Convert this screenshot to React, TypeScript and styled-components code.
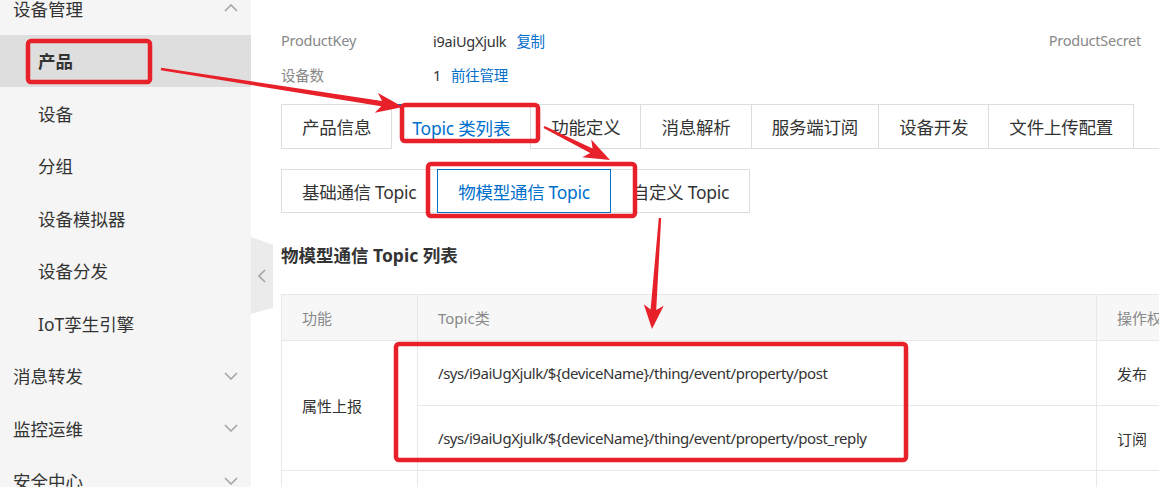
import styled, { createGlobalStyle } from 'styled-components';

const GlobalStyle = createGlobalStyle`
  html, body {
    margin: 0;
    padding: 0;
  }
  body {
    font-family: "Noto Sans", "Noto Sans CJK SC", sans-serif;
    color: #333;
    background: #fff;
    overflow: hidden;
  }
`;

const BLUE = '#0070cc';
const RED = '#e8202a';

type MenuEntry = {
  label: string;
  level: 0 | 1;
  active?: boolean;
  chevron?: 'up' | 'down';
};

const menu: MenuEntry[] = [
  { label: '设备管理', level: 0, chevron: 'up' },
  { label: '产品', level: 1, active: true },
  { label: '设备', level: 1 },
  { label: '分组', level: 1 },
  { label: '设备模拟器', level: 1 },
  { label: '设备分发', level: 1 },
  { label: 'IoT孪生引擎', level: 1 },
  { label: '消息转发', level: 0, chevron: 'down' },
  { label: '监控运维', level: 0, chevron: 'down' },
  { label: '安全中心', level: 0, chevron: 'down' },
];

const tabs = ['产品信息', 'Topic 类列表', '功能定义', '消息解析', '服务端订阅', '设备开发', '文件上传配置'];
const subTabs = ['基础通信 Topic', '物模型通信 Topic', '自定义 Topic'];

const topics = [
  { path: '/sys/i9aiUgXjulk/${deviceName}/thing/event/property/post', perm: '发布' },
  { path: '/sys/i9aiUgXjulk/${deviceName}/thing/event/property/post_reply', perm: '订阅' },
];

function Chevron({ dir }: { dir: 'up' | 'down' | 'left' }) {
  const d =
    dir === 'up' ? 'M1 7 L7 1 L13 7' : dir === 'down' ? 'M1 1 L7 7 L13 1' : 'M7 1 L1 7 L7 13';
  const w = dir === 'left' ? 8 : 14;
  const h = dir === 'left' ? 14 : 8;
  return (
    <svg width={w} height={h} viewBox={`0 0 ${w} ${h}`} fill="none">
      <path d={d} stroke="#a6a6a6" strokeWidth="1.6" />
    </svg>
  );
}

// red arrow as one polygon: tapering shaft + head
function arrowPoints(
  x1: number,
  y1: number,
  x2: number,
  y2: number,
  tail: number,
  shaft: number,
  headLen: number,
  headW: number,
) {
  const dx = x2 - x1;
  const dy = y2 - y1;
  const len = Math.hypot(dx, dy);
  const ux = dx / len;
  const uy = dy / len;
  const nx = -uy;
  const ny = ux;
  const bx = x2 - ux * headLen;
  const by = y2 - uy * headLen;
  const nbx = x2 - ux * headLen * 0.8;
  const nby = y2 - uy * headLen * 0.8;
  const pts = [
    [x1 + nx * tail, y1 + ny * tail],
    [nbx + nx * shaft, nby + ny * shaft],
    [bx + nx * headW, by + ny * headW],
    [x2, y2],
    [bx - nx * headW, by - ny * headW],
    [nbx - nx * shaft, nby - ny * shaft],
    [x1 - nx * tail, y1 - ny * tail],
  ];
  return pts.map((p) => `${p[0].toFixed(1)},${p[1].toFixed(1)}`).join(' ');
}

function Annotations() {
  return (
    <Overlay width="1159" height="487" viewBox="0 0 1159 487">
      <g fill="none" stroke={RED} strokeWidth="4.5">
        <rect x="28" y="41" width="122" height="41" rx="3" />
        <rect x="402" y="105" width="136" height="36" rx="3" />
        <rect x="428" y="164" width="207" height="52" rx="3" />
        <rect x="396" y="344" width="510" height="116" rx="3" />
      </g>
      <g fill={RED}>
        <polygon points={arrowPoints(161, 69, 403, 107, 1.2, 2.6, 27, 10)} />
        <polygon points={arrowPoints(544, 127, 610, 160, 1.2, 2.6, 26, 10)} />
        <polygon points={arrowPoints(660, 218, 652, 329, 1.2, 2.8, 24, 10)} />
      </g>
    </Overlay>
  );
}

export default function App() {
  return (
    <Page>
      <GlobalStyle />
      <Sidebar>
        <MenuList>
          {menu.map((m) => (
            <MenuItem key={m.label} $level={m.level} $active={!!m.active}>
              <span>{m.label}</span>
              {m.chevron ? <Chevron dir={m.chevron} /> : null}
            </MenuItem>
          ))}
        </MenuList>
      </Sidebar>
      <CollapseHandle>
        <Chevron dir="left" />
      </CollapseHandle>
      <Main>
        <InfoGrid>
          <Label>ProductKey</Label>
          <Value>
            i9aiUgXjulk<LinkText>复制</LinkText>
          </Value>
          <Label>ProductSecret</Label>
          <Label>设备数</Label>
          <Value>
            1<LinkText>前往管理</LinkText>
          </Value>
          <span />
        </InfoGrid>
        <TabBar>
          {tabs.map((t, i) => (
            <Tab key={t} $active={i === 1}>
              {t}
            </Tab>
          ))}
        </TabBar>
        <SubTabGroup>
          {subTabs.map((t, i) => (
            <SubTab key={t} $active={i === 1}>
              {t}
            </SubTab>
          ))}
        </SubTabGroup>
        <SectionTitle>物模型通信 Topic 列表</SectionTitle>
        <Table>
          <colgroup>
            <col style={{ width: 136 }} />
            <col style={{ width: 679 }} />
            <col style={{ width: 200 }} />
          </colgroup>
          <thead>
            <tr>
              <Th>功能</Th>
              <Th>Topic类</Th>
              <Th>操作权限</Th>
            </tr>
          </thead>
          <tbody>
            {topics.map((t, i) => (
              <tr key={t.path}>
                {i === 0 ? <Td rowSpan={2}>属性上报</Td> : null}
                <PathCell>{t.path}</PathCell>
                <Td>{t.perm}</Td>
              </tr>
            ))}
            <tr>
              <Td />
              <Td />
              <Td />
            </tr>
          </tbody>
        </Table>
      </Main>
      <Annotations />
    </Page>
  );
}

const Page = styled.div`
  position: relative;
  display: flex;
  width: 1159px;
  height: 487px;
  overflow: hidden;
`;

const Sidebar = styled.aside`
  width: 251px;
  flex-shrink: 0;
  background: #f5f5f5;
  overflow: hidden;
`;

const MenuList = styled.div`
  margin-top: -18px;
  display: flex;
  flex-direction: column;
`;

const MenuItem = styled.div<{ $level: 0 | 1; $active: boolean }>`
  height: 52.5px;
  flex-shrink: 0;
  display: flex;
  align-items: center;
  justify-content: space-between;
  padding-left: ${(p) => (p.$level === 0 ? '13px' : '38px')};
  padding-right: 13px;
  font-size: 17.5px;
  color: #333;
  font-weight: ${(p) => (p.$active ? 700 : 400)};
  background: ${(p) => (p.$active ? '#dedede' : 'transparent')};
`;

const CollapseHandle = styled.div`
  position: absolute;
  left: 251px;
  top: 237px;
  width: 22px;
  height: 77px;
  background: #ebebeb;
  clip-path: polygon(0 0, 100% 10%, 100% 92%, 0 100%);
  display: flex;
  align-items: center;
  padding-left: 7px;
  box-sizing: border-box;
`;

const Main = styled.main`
  flex: 1;
  min-width: 0;
  padding-left: 30px;
  overflow: hidden;
`;

const InfoGrid = styled.div`
  display: grid;
  grid-template-columns: 152px 1fr auto;
  grid-auto-rows: 34px;
  align-items: center;
  padding-top: 23px;
  padding-right: 18px;
  font-size: 14.5px;
  letter-spacing: -0.25px;
`;

const Label = styled.span`
  color: #888;
`;

const Value = styled.span`
  color: #333;
`;

const LinkText = styled.span`
  color: ${BLUE};
  margin-left: 10px;
`;

const TabBar = styled.div`
  display: flex;
  margin-top: 13px;
  border-bottom: 1px solid #ddd;
`;

const Tab = styled.div<{ $active: boolean }>`
  height: 45px;
  margin-bottom: -1px;
  box-sizing: border-box;
  display: flex;
  align-items: center;
  padding: 0 20px;
  font-size: 17.5px;
  letter-spacing: -0.2px;
  white-space: nowrap;
  background: #fff;
  color: ${(p) => (p.$active ? BLUE : '#333')};
  border: 1px solid #ddd;
  border-right: none;
  border-top: ${(p) => (p.$active ? `2px solid ${BLUE}` : '1px solid #ddd')};
  border-bottom-color: ${(p) => (p.$active ? '#fff' : '#ddd')};

  &:last-child {
    border-right: 1px solid #ddd;
  }
`;

const SubTabGroup = styled.div`
  display: inline-flex;
  margin-top: 20px;
`;

const SubTab = styled.div<{ $active: boolean }>`
  height: 44px;
  box-sizing: border-box;
  display: flex;
  align-items: center;
  padding: 0 20px;
  font-size: 17.5px;
  letter-spacing: -0.3px;
  white-space: nowrap;
  color: ${(p) => (p.$active ? BLUE : '#333')};
  border: 1px solid transparent;
  border-top-color: #ddd;
  border-bottom-color: #ddd;

  &:first-child {
    border-left-color: #ddd;
  }
  &:last-child {
    border-right-color: #ddd;
  }
  ${(p) => (p.$active ? `border-color: ${BLUE} !important;` : '')}
`;

const SectionTitle = styled.h3`
  margin: 30px 0 0;
  font-size: 17.5px;
  line-height: 24px;
  font-weight: 700;
  color: #333;
`;

const Table = styled.table`
  margin-top: 27px;
  width: 1015px;
  table-layout: fixed;
  border-collapse: collapse;
  font-size: 15px;
`;

const Th = styled.th`
  height: 46px;
  box-sizing: border-box;
  background: #f7f7f7;
  color: #888;
  font-weight: 400;
  text-align: left;
  padding: 0 20px;
  border: 1px solid #e8e8e8;
  white-space: nowrap;
`;

const Td = styled.td`
  height: 65px;
  box-sizing: border-box;
  padding: 0 20px;
  color: #333;
  border: 1px solid #e8e8e8;
  white-space: nowrap;
`;

const PathCell = styled(Td)`
  letter-spacing: -0.45px;
`;

const Overlay = styled.svg`
  position: absolute;
  left: 0;
  top: 0;
  pointer-events: none;
`;
